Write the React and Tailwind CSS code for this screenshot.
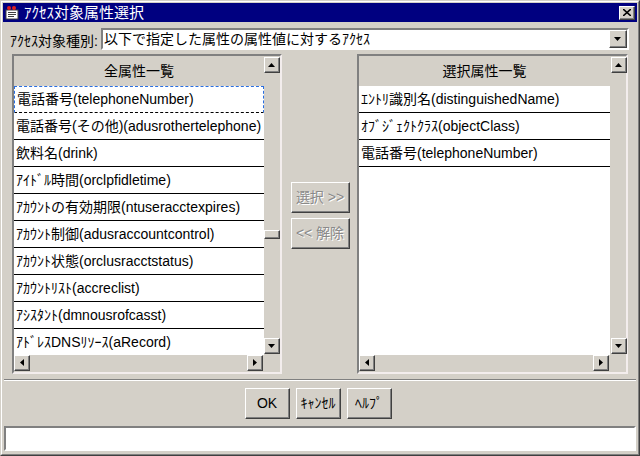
import React from 'react';

const Tri = ({ dir }) => {
  const pts = {
    up: '0,4 7,4 3.5,0',
    down: '0,0 7,0 3.5,4',
    left: '4,0 4,7 0,3.5',
    right: '0,0 0,7 4,3.5',
  }[dir];
  const vert = dir === 'up' || dir === 'down';
  return (
    <svg width={vert ? 7 : 4} height={vert ? 4 : 7} viewBox={vert ? '0 0 7 4' : '0 0 4 7'}>
      <polygon points={pts} fill="#000" />
    </svg>
  );
};

const Raised = ({ className = '', children }) => (
  <div className={`border border-t-white border-l-white border-r-[#404040] border-b-[#404040] ${className}`}>
    <div className="w-full h-full border-r border-b border-r-[#808080] border-b-[#808080] flex items-center justify-center">
      {children}
    </div>
  </div>
);

const Arrow = ({ dir }) => (
  <Raised className="w-[16px] h-[16px] bg-[#d4d0c8] shrink-0">
    <Tri dir={dir} />
  </Raised>
);

const Panel = ({ title, items, listW, colW, thumb, focusFirst }) => (
  <div className="h-full border-2 border-t-[#808080] border-l-[#808080] border-r-[#f3eded] border-b-[#f3eded]">
    <div className="grid h-full" style={{ gridTemplateColumns: `${colW}px 1fr`, gridTemplateRows: '30px 269px 16px' }}>
      <div className="flex items-center justify-center text-[14px] text-black" style={{ width: listW }}>
        {title}
      </div>
      <div className="row-span-2 flex flex-col items-end pt-px">
        <Arrow dir="up" />
        {thumb && <Raised className="w-[16px] h-[9px] mt-[157px] bg-[#d4d0c8]" />}
        <div className="flex-1" />
        <div className="mb-px">
          <Arrow dir="down" />
        </div>
      </div>
      <div className="bg-white overflow-hidden" style={{ width: listW }}>
        {items.map((t, i) => (
          <div
            key={i}
            className={`h-[27px] flex items-center pl-[2px] whitespace-nowrap overflow-hidden text-[14px] text-black border-b border-b-black ${
              focusFirst && i === 0 ? 'border border-dashed border-[#2a6ee0]' : ''
            }`}
          >
            {t}
          </div>
        ))}
      </div>
      <div className="flex justify-between items-start" style={{ width: listW }}>
        <Arrow dir="left" />
        <div className="mr-px">
          <Arrow dir="right" />
        </div>
      </div>
      <div />
    </div>
  </div>
);

const left = [
  '電話番号(telephoneNumber)',
  '電話番号(その他)(adusrothertelephone)',
  '飲料名(drink)',
  'ｱｲﾄﾞﾙ時間(orclpfidletime)',
  'ｱｶｳﾝﾄの有効期限(ntuseracctexpires)',
  'ｱｶｳﾝﾄ制御(adusraccountcontrol)',
  'ｱｶｳﾝﾄ状態(orclusracctstatus)',
  'ｱｶｳﾝﾄﾘｽﾄ(accreclist)',
  'ｱｼｽﾀﾝﾄ(dmnousrofcasst)',
  'ｱﾄﾞﾚｽDNSﾘｿｰｽ(aRecord)',
];

const right = ['ｴﾝﾄﾘ識別名(distinguishedName)', 'ｵﾌﾞｼﾞｪｸﾄｸﾗｽ(objectClass)', '電話番号(telephoneNumber)'];

const App = () => {
  return (
    <div className="w-[640px] h-[456px] bg-[#d4d0c8] font-['Liberation_Sans','Noto_Sans_CJK_JP',sans-serif] border border-t-[#d4d0c8] border-l-[#d4d0c8] border-r-[#404040] border-b-[#404040]">
      <div className="h-full border border-t-white border-l-white border-r-[#808080] border-b-[#808080] p-px flex flex-col">
        {/* Title bar */}
        <div className="h-[19px] bg-[#000080] flex items-center pl-[1px] pr-[2px]">
          <svg width="16" height="16" viewBox="0 0 16 16" className="shrink-0">
            <rect x="2" y="5" width="12" height="9" fill="#fff" stroke="#404040" />
            <rect x="4" y="7" width="8" height="1" fill="#404040" />
            <rect x="4" y="9" width="8" height="1" fill="#404040" />
            <rect x="4" y="11" width="6" height="1" fill="#404040" />
            <circle cx="5" cy="3" r="2" fill="#e02020" />
            <circle cx="10" cy="3" r="2" fill="#e02020" />
          </svg>
          <span className="ml-[4px] text-white text-[15px] leading-none">ｱｸｾｽ対象属性選択</span>
          <div className="flex-1" />
          <Raised className="w-[16px] h-[14px] bg-[#d4d0c8]">
            <svg width="8" height="7" viewBox="0 0 8 7">
              <path d="M0 0 L8 7 M8 0 L0 7" stroke="#000" strokeWidth="1.6" />
            </svg>
          </Raised>
        </div>

        {/* Access type row */}
        <div className="mt-[6px] h-[22px] flex items-center pl-[7px] pr-[8px]">
          <span className="text-[14px] text-black w-[91px] whitespace-nowrap mt-[4px]">ｱｸｾｽ対象種別:</span>
          <div className="flex-1 h-full border-2 border-t-[#808080] border-l-[#808080] border-r-white border-b-white bg-white flex items-center">
            <span className="flex-1 pl-[1px] text-[14px] text-black whitespace-nowrap">以下で指定した属性の属性値に対するｱｸｾｽ</span>
            <Raised className="w-[18px] h-[18px] bg-[#d4d0c8]">
              <Tri dir="down" />
            </Raised>
          </div>
        </div>

        {/* Lists */}
        <div className="mt-[4px] h-[320px] flex pl-[9px]">
          <div className="w-[270px] h-full">
            <Panel title="全属性一覧" items={left} listW={250} colW={250} thumb focusFirst />
          </div>
          <div className="w-[75px] flex flex-col items-start pl-[9px] pt-[128px] gap-[5px]">
            {['選択 >>', '<< 解除'].map((t) => (
              <Raised key={t} className="w-[59px] h-[31px] bg-[#d4d0c8]">
                <span className="text-[14px] text-[#8a8a8a] [text-shadow:1px_1px_0_#fff] whitespace-nowrap">{t}</span>
              </Raised>
            ))}
          </div>
          <div className="w-[271px] h-full">
            <Panel title="選択属性一覧" items={right} listW={251} colW={252} />
          </div>
        </div>

        {/* Separator */}
        <div className="mt-[5px] h-[2px] mx-[1px] border-t border-t-[#808080] border-b border-b-white" />

        {/* Buttons */}
        <div className="mt-[7px] h-[31px] flex justify-center gap-[6px] pr-[3px]">
          {['OK', 'ｷｬﾝｾﾙ', 'ﾍﾙﾌﾟ'].map((t) => (
            <Raised key={t} className="w-[45px] h-[31px] bg-[#d4d0c8]">
              <span className="text-[14px] text-black whitespace-nowrap">{t}</span>
            </Raised>
          ))}
        </div>

        {/* Status field */}
        <div className="mt-[7px] h-[25px] mx-[1px] border-2 border-t-[#808080] border-l-[#808080] border-r-white border-b-white bg-white" />
      </div>
    </div>
  );
};

export default App;
